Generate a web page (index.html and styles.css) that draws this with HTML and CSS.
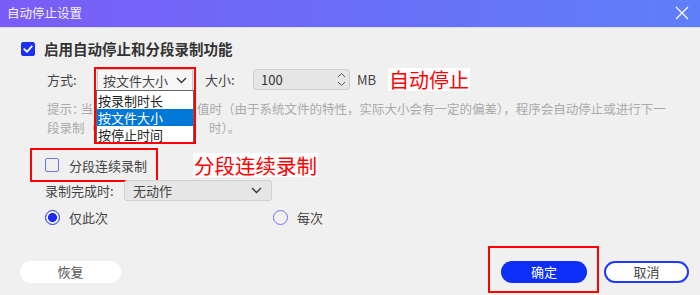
FILE: index.html
```html
<!DOCTYPE html>
<html lang="zh-CN">
<head>
<meta charset="utf-8">
<title>自动停止设置</title>
<link rel="stylesheet" href="styles.css">
</head>
<body>
<div class="window">
  <div class="titlebar">
    <span class="title">自动停止设置</span>
    <svg class="close" width="14" height="14" viewBox="0 0 14 14"><path d="M1 1 L13 13 M13 1 L1 13" stroke="#ffffff" stroke-width="1.2" fill="none"/></svg>
  </div>
  <div class="content">
    <div class="row-main">
      <span class="check checked"><svg width="14" height="14" viewBox="0 0 14 14"><path d="M3.2 7.2 L6 9.8 L10.8 4.4" stroke="#ffffff" stroke-width="1.8" fill="none" stroke-linecap="round" stroke-linejoin="round"/></svg></span>
      <span class="main-label">启用自动停止和分段录制功能</span>
    </div>
    <div class="row-mode">
      <span class="lbl lbl-mode">方式:</span>
      <div class="combo-wrap">
        <div class="combo">
          <span>按文件大小</span>
          <svg class="chev" width="11" height="7" viewBox="0 0 11 7"><path d="M1 1 L5.5 5.5 L10 1" stroke="#333" stroke-width="1.3" fill="none"/></svg>
        </div>
        <ul class="droplist"><li>按录制时长</li><li class="sel">按文件大小</li><li>按停止时间</li></ul>
        <div class="redbox redbox-combo"></div>
      </div>
      <span class="lbl lbl-size">大小:</span>
      <div class="spin">
        <span>100</span>
        <span class="spin-arrows">
          <svg width="9" height="6" viewBox="0 0 9 6"><path d="M1 5 L4.5 1.5 L8 5" stroke="#555" stroke-width="1" fill="none"/></svg>
          <svg width="9" height="6" viewBox="0 0 9 6"><path d="M1 1 L4.5 4.5 L8 1" stroke="#555" stroke-width="1" fill="none"/></svg>
        </span>
      </div>
      <span class="unit">MB</span>
      <span class="note note-stop">自动停止</span>
    </div>
    <div class="hint">
      <div class="hint-line"><span class="hint-part">提示<span class="tight">：</span>当</span><span class="gap gap1"></span><span class="hint-part">值时（由于系统文件的特性，实际大小会有一定的偏差），程序会自动停止或进行下一</span></div>
      <div class="hint-line"><span class="hint-part">段录制<span class="tight">（</span></span><span class="gap gap2"></span><span class="hint-part">时）。</span></div>
    </div>
    <div class="row-seg">
      <div class="seg-box">
        <span class="check"></span>
        <span class="seg-label">分段连续录制</span>
      </div>
      <span class="note note-seg">分段连续录制</span>
    </div>
    <div class="row-done">
      <span class="lbl lbl-done">录制完成时:</span>
      <div class="combo2">
        <span>无动作</span>
        <svg class="chev" width="11" height="7" viewBox="0 0 11 7"><path d="M1 1 L5.5 5.5 L10 1" stroke="#333" stroke-width="1.3" fill="none"/></svg>
      </div>
    </div>
    <div class="row-radio">
      <label class="radio-item first"><span class="radio on"></span><span>仅此次</span></label>
      <label class="radio-item"><span class="radio"></span><span>每次</span></label>
    </div>
    <div class="row-buttons">
      <button class="btn btn-reset">恢复</button>
      <div class="right-btns">
        <div class="ok-wrap">
          <button class="btn btn-ok">确定</button>
          <div class="redbox redbox-ok"></div>
        </div>
        <button class="btn btn-cancel">取消</button>
      </div>
    </div>
  </div>
</div>
</body>
</html>
```

FILE: styles.css
```css
* { box-sizing: border-box; }
html, body { margin: 0; padding: 0; }
body {
  background: #f0f0f0;
  font-family: "Noto Sans CJK SC", "Noto Sans", sans-serif;
  color: #444;
}
.window {
  width: 700px;
  height: 295px;
  overflow: hidden;
  display: flex;
  flex-direction: column;
  background: #f0f0f0;
}
.titlebar {
  height: 28px;
  flex: none;
  display: flex;
  align-items: center;
  justify-content: space-between;
  padding: 0 11px 1px 7px;
  background: linear-gradient(90deg, #7b5cf6 0%, #6a6ef8 50%, #5f7ff9 100%);
  border-bottom: 1px solid #dcdcf6;
}
.title {
  color: #f2f2ff;
  font-size: 12.5px;
  line-height: 16px;
}
.close { display: block; margin-top: -1px; }
.content {
  flex: 1;
  display: flex;
  flex-direction: column;
}
.row-main {
  display: flex;
  align-items: center;
  height: 16px;
  margin-top: 13px;
  padding-left: 21px;
  gap: 9px;
}
.check {
  width: 14px;
  height: 14px;
  flex: none;
  border-radius: 2px;
  border: 1.5px solid #7078e8;
  display: flex;
  align-items: center;
  justify-content: center;
}
.check.checked {
  background: #1e30f2;
  border-color: #1e30f2;
}
.check.checked svg { display: block; margin: -1.5px; }
.main-label {
  font-weight: bold;
  font-size: 14.5px;
  color: #333;
  line-height: 16px;
}
.row-mode {
  display: flex;
  align-items: center;
  height: 21px;
  margin-top: 12px;
  padding-left: 47px;
  position: relative;
  z-index: 2;
}
.lbl { font-size: 13px; color: #444; line-height: 16px; }
.lbl-mode { width: 50px; }
.combo-wrap {
  position: relative;
  width: 96px;
  height: 21px;
}
.combo {
  width: 96px;
  height: 21px;
  background: #f6f6f6;
  border: 1px solid #c8c8c8;
  border-bottom: none;
  display: flex;
  align-items: center;
  justify-content: space-between;
  padding: 0 5px 0 5px;
  font-size: 13px;
  color: #444;
}
.chev { display: block; }
.droplist {
  position: absolute;
  left: -1px;
  top: 21px;
  width: 98px;
  margin: 0;
  padding: 1px 0 0 0;
  list-style: none;
  background: #ffffff;
  border: 1px solid #666;
  font-size: 13px;
  color: #222;
}
.droplist li {
  height: 17px;
  line-height: 17px;
  padding-left: 1px;
}
.droplist li.sel {
  background: #0078d7;
  color: #ffffff;
}
.redbox {
  position: absolute;
  border: 2px solid #ff0000;
  pointer-events: none;
}
.redbox-combo {
  left: -3px;
  top: -2px;
  width: 102px;
  height: 77px;
}
.lbl-size { margin-left: 12px; width: 48px; }
.spin {
  width: 97px;
  height: 21px;
  background: #e6e6e6;
  border: 1px solid #cfcfcf;
  border-radius: 3px;
  display: flex;
  align-items: center;
  justify-content: space-between;
  padding: 0 3px 0 7px;
  font-size: 13px;
  color: #333;
}
.spin-arrows {
  display: flex;
  flex-direction: column;
  gap: 3px;
}
.spin-arrows svg { display: block; }
.unit {
  margin-left: 7px;
  font-size: 13px;
  color: #444;
}
.note {
  background: #ffffff;
  color: #ff0000;
  line-height: 24px;
  padding: 0 1px;
}
.note-stop {
  margin-left: 12px;
  font-size: 20px;
  height: 23px;
}
.hint {
  margin-top: 9px;
  padding-left: 47px;
  font-size: 12.5px;
  line-height: 19px;
  color: #aaaaaa;
  position: relative;
  z-index: 1;
}
.hint-line {
  display: flex;
  white-space: nowrap;
  height: 19px;
}
.hint-part { display: block; }
.tight { letter-spacing: -4px; }
.gap { display: block; flex: none; }
.gap1 { width: 104px; }
.gap2 { width: 116px; }
.row-seg {
  display: flex;
  align-items: center;
  margin-top: 13px;
}
.seg-box {
  margin-left: 32px;
  width: 124px;
  height: 30px;
  outline: 2px solid #ff0000;
  display: flex;
  align-items: center;
  padding-left: 13px;
  gap: 10px;
}
.seg-label { font-size: 13px; color: #444; }
.note-seg {
  margin-left: 37px;
  font-size: 20.5px;
  height: 24px;
}
.row-done {
  display: flex;
  align-items: center;
  height: 21px;
  padding-left: 45px;
}
.lbl-done { width: 79px; }
.combo2 {
  width: 148px;
  height: 21px;
  background: #e6e6e6;
  border: 1px solid #d0d0d0;
  border-radius: 3px;
  display: flex;
  align-items: center;
  justify-content: space-between;
  padding: 0 9px 0 8px;
  font-size: 13px;
  color: #444;
}
.row-radio {
  display: flex;
  align-items: center;
  height: 16px;
  margin-top: 8px;
  padding-left: 45px;
}
.radio-item {
  display: flex;
  align-items: center;
  gap: 9px;
  font-size: 13px;
  color: #444;
}
.radio-item.first { width: 228px; }
.radio {
  width: 15px;
  height: 15px;
  border-radius: 50%;
  border: 1.5px solid #6a74f0;
  background: transparent;
  flex: none;
}
.radio.on {
  border-color: #1a2cf0;
  background: radial-gradient(circle, #1a2cf0 0 4.2px, transparent 4.7px);
}
.row-buttons {
  display: flex;
  align-items: center;
  justify-content: space-between;
  margin-top: 36px;
  padding: 0 11px 0 20px;
}
.right-btns {
  display: flex;
  align-items: center;
  gap: 17px;
}
.btn {
  height: 22px;
  border-radius: 11px;
  font-family: "Noto Sans CJK SC", "Noto Sans", sans-serif;
  font-size: 13px;
  line-height: 18px;
  padding: 0;
  border: none;
}
.btn-reset {
  width: 101px;
  background: #ffffff;
  color: #555;
}
.ok-wrap { position: relative; }
.btn-ok {
  display: block;
  width: 86px;
  background: #0c2ef6;
  color: #ffffff;
}
.redbox-ok {
  left: -13px;
  top: -15px;
  right: -12px;
  bottom: -10px;
}
.btn-cancel {
  width: 85px;
  background: #ffffff;
  border: 2px solid #1d3cf4;
  color: #444;
}
```
